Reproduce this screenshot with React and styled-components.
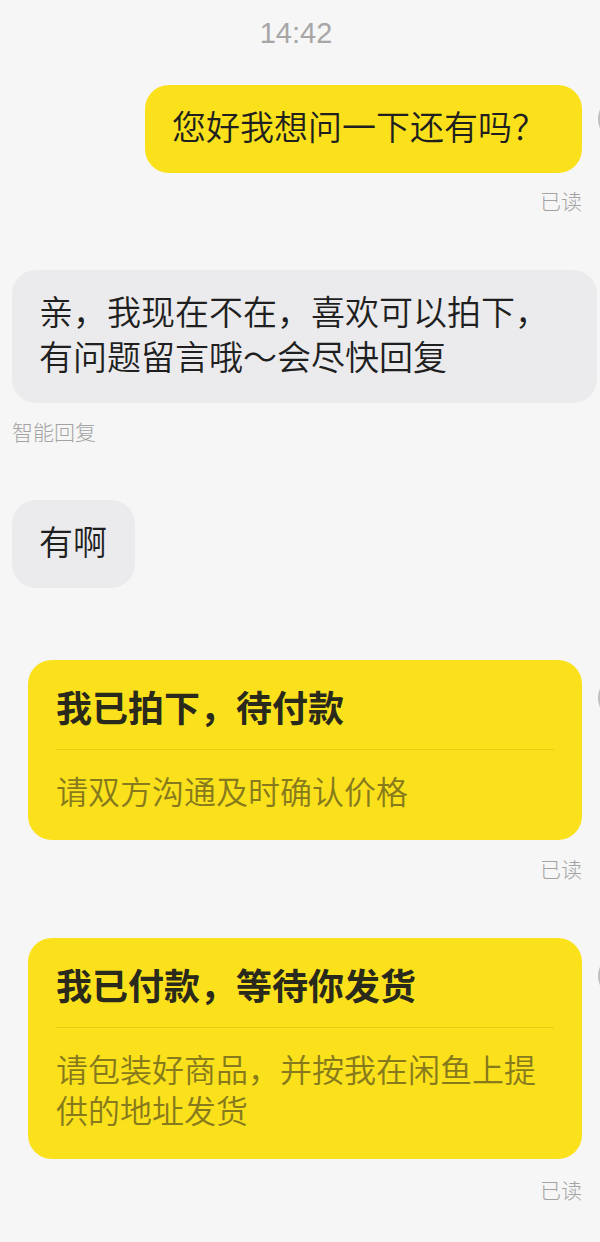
import styled, { createGlobalStyle } from "styled-components";

const GlobalStyle = createGlobalStyle`
  html, body {
    margin: 0;
    padding: 0;
    background: #f6f6f6;
    overflow-x: hidden;
  }
  body {
    font-family: "Noto Sans CJK SC", "Noto Sans", sans-serif;
    color: #1f1f1f;
  }
`;

const Page = styled.div`
  width: 600px;
  min-height: 1242px;
  display: flex;
  flex-direction: column;
  padding-top: 16px;
  box-sizing: border-box;
  overflow: hidden;
`;

const TimeStamp = styled.div`
  text-align: center;
  font-family: "Liberation Sans", Arial, sans-serif;
  font-size: 29px;
  line-height: 34px;
  color: #a6a6a6;
  padding-right: 8px;
`;

const OutRow = styled.div`
  display: flex;
  justify-content: flex-end;
  align-items: flex-start;
  gap: 16px;
  margin-top: ${(p) => p.$top}px;
  margin-right: -42px;
`;

const InRow = styled.div`
  display: flex;
  justify-content: flex-start;
  margin-top: ${(p) => p.$top}px;
  padding-left: 12px;
`;

/* only the left tip of the avatar shows at the right edge */
const Avatar = styled.div`
  flex: none;
  width: 44px;
  height: 44px;
  border-radius: 50%;
  margin-top: ${(p) => p.$top}px;
  background: #bdbdbd;
`;

const Bubble = styled.div`
  font-size: 34px;
  line-height: 45px;
  font-weight: 350;
  padding: 18px ${(p) => p.$right || 28}px 25px 27px;
  border-radius: 24px;
  background: ${(p) => (p.$mine ? "#fae11c" : "#ebebed")};
  color: #1f1f1f;
  white-space: nowrap;
  width: ${(p) => (p.$width ? `${p.$width}px` : "auto")};
  box-sizing: border-box;
`;

const Note = styled.div`
  font-size: 21px;
  line-height: 26px;
  font-weight: 300;
  color: #a3a3a3;
  margin-top: ${(p) => p.$top}px;
  text-align: ${(p) => (p.$right ? "right" : "left")};
  padding: ${(p) => (p.$right ? "0 18px 0 0" : "0 0 0 12px")};
`;

const Card = styled.div`
  width: 554px;
  box-sizing: border-box;
  background: #fae11c;
  border-radius: 24px;
  padding: 24px 28px 29px;
  display: flex;
  flex-direction: column;
`;

const CardTitle = styled.div`
  font-size: 36px;
  line-height: 44px;
  font-weight: 700;
  color: #2a2a1c;
`;

const Divider = styled.div`
  height: 1px;
  background: #e6cd1a;
  margin: 21px 0 20px;
`;

const CardText = styled.div`
  font-size: 32px;
  line-height: 41px;
  font-weight: 350;
  color: #877a1c;
`;

export default function App() {
  return (
    <>
      <GlobalStyle />
      <Page>
        <TimeStamp>14:42</TimeStamp>

        <OutRow $top={35}>
          <Bubble $mine $right={36}>您好我想问一下还有吗？</Bubble>
          <Avatar $top={12} />
        </OutRow>
        <Note $right $top={14}>已读</Note>

        <InRow $top={57}>
          <Bubble $width={585}>
            亲，我现在不在，喜欢可以拍下，
            <br />
            有问题留言哦～会尽快回复
          </Bubble>
        </InRow>
        <Note $top={15}>智能回复</Note>

        <InRow $top={56}>
          <Bubble>有啊</Bubble>
        </InRow>

        <OutRow $top={72}>
          <Card>
            <CardTitle>我已拍下，待付款</CardTitle>
            <Divider />
            <CardText>请双方沟通及时确认价格</CardText>
          </Card>
          <Avatar $top={16} />
        </OutRow>
        <Note $right $top={15}>已读</Note>

        <OutRow $top={57}>
          <Card>
            <CardTitle>我已付款，等待你发货</CardTitle>
            <Divider />
            <CardText>
              请包装好商品，并按我在闲鱼上提
              <br />
              供的地址发货
            </CardText>
          </Card>
          <Avatar $top={16} />
        </OutRow>
        <Note $right $top={17}>已读</Note>
      </Page>
    </>
  );
}
